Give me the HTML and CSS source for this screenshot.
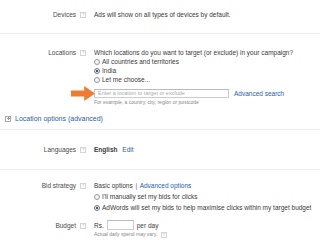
FILE: index.html
```html
<!DOCTYPE html>
<html lang="en">
<head>
  <meta charset="UTF-8" />
  <title>Campaign settings</title>
  <link rel="stylesheet" href="styles.css">
</head>
<body>
  <div class="settings">
    <div class="section devices">
      <div class="row">
        <div class="label">Devices <span class="help">?</span></div>
        <div class="content">Ads will show on all types of devices by default.</div>
      </div>
    </div>

    <div class="section locations">
      <div class="row">
        <div class="label">Locations <span class="help">?</span></div>
        <div class="content">
          <div class="line">Which locations do you want to target (or exclude) in your campaign?</div>
          <div class="radio"><span class="dot"></span>All countries and territories</div>
          <div class="radio"><span class="dot on"></span>India</div>
          <div class="radio"><span class="dot"></span>Let me choose...</div>
          <div class="search">
            <span class="arrow"></span>
            <input class="field loc" type="text" placeholder="Enter a location to target or exclude">
            <a class="link" href="#">Advanced search</a>
          </div>
          <div class="hint">For example, a country, city, region or postcode</div>
        </div>
      </div>
      <div class="advanced"><span class="expand"></span><a class="link" href="#">Location options (advanced)</a></div>
    </div>

    <div class="section languages">
      <div class="row">
        <div class="label">Languages <span class="help">?</span></div>
        <div class="content"><b>English</b> <a class="link edit" href="#">Edit</a></div>
      </div>
    </div>

    <div class="section bids">
      <div class="row">
        <div class="label">Bid strategy <span class="help">?</span></div>
        <div class="content">
          <div class="line">Basic options <span class="sep">|</span> <a class="link" href="#">Advanced options</a></div>
          <div class="radio spaced"><span class="dot"></span>I'll manually set my bids for clicks</div>
          <div class="radio spaced"><span class="dot on"></span>AdWords will set my bids to help maximise clicks within my target budget</div>
        </div>
      </div>
      <div class="row budget">
        <div class="label">Budget <span class="help">?</span></div>
        <div class="content">
          <div class="money">Rs. <input class="field rs" type="text"> per day</div>
          <div class="hint">Actual daily spend may vary. <span class="help">?</span></div>
        </div>
      </div>
    </div>
  </div>
</body>
</html>
```

FILE: styles.css
```css
body {
  margin: 0;
  background: #fff;
  font-family: "Liberation Sans", Arial, sans-serif;
  font-size: 6.5px;
  line-height: 9px;
  color: #3a3a3a;
}
.section {
  border-bottom: 1px solid #ececec;
}
.devices { padding: 10px 0 14px; }
.locations { padding: 14px 0 6px; }
.languages { padding: 15px 0 15px; border-bottom-color: #efefef; }
.bids { padding: 11px 0 0; border-bottom: none; }
.row {
  display: grid;
  grid-template-columns: 94px 1fr;
}
.label {
  display: flex;
  justify-content: flex-end;
  align-items: flex-start;
  gap: 4px;
  padding-right: 8px;
  color: #4a4a4a;
}
.help {
  display: inline-block;
  width: 4px;
  height: 4px;
  margin-top: 2px;
  border: 1px solid #d4d4d4;
  color: #aaa;
  font-size: 4px;
  line-height: 4px;
  text-align: center;
}
.radio {
  display: flex;
  align-items: center;
  gap: 2px;
}
.radio.spaced { margin-top: 2px; }
.dot {
  width: 4px;
  height: 4px;
  border: 1px solid #999;
  border-radius: 50%;
  background: #f4f4f4;
}
.dot.on {
  background: radial-gradient(circle, #2a5db0 45%, #e8eef8 55%);
  border-color: #777;
}
.search {
  position: relative;
  display: flex;
  align-items: center;
  gap: 5px;
  margin-top: 5px;
}
.field {
  box-sizing: border-box;
  border: 1px solid #ccc;
  border-top-color: #bbb;
  font: inherit;
  padding: 0 3px;
  margin: 0;
  background: #fff;
}
.loc {
  width: 135px;
  height: 9px;
  font-size: 5.5px;
}
.loc::placeholder { color: #aaa; }
.link {
  color: #2a5db0;
  text-decoration: none;
}
.arrow {
  position: absolute;
  left: -23px;
  top: -3px;
  width: 24px;
  height: 15px;
  background: #ee7b30;
  clip-path: polygon(0 30%, 55% 30%, 55% 0, 100% 50%, 55% 100%, 55% 70%, 0 70%);
}
.hint {
  font-size: 5px;
  line-height: 8px;
  color: #888;
}
.advanced {
  display: flex;
  align-items: center;
  gap: 4px;
  margin-top: 8px;
  padding-left: 5px;
}
.expand {
  width: 4px;
  height: 4px;
  border: 1px solid #aaa;
  background: linear-gradient(#999, #999) center / 3px 1px no-repeat,
              linear-gradient(#999, #999) center / 1px 3px no-repeat;
}
.advanced .link { font-size: 7px; }
.edit { margin-left: 3px; }
.sep { margin: 0 1px; color: #666; }
.budget { margin-top: 8px; }
.budget .label { align-items: center; height: 10px; }
.money {
  display: flex;
  align-items: center;
  gap: 3px;
  height: 10px;
}
.rs {
  width: 27px;
  height: 10px;
}
.hint .help { margin-left: 2px; vertical-align: middle; margin-top: 0; }
```
